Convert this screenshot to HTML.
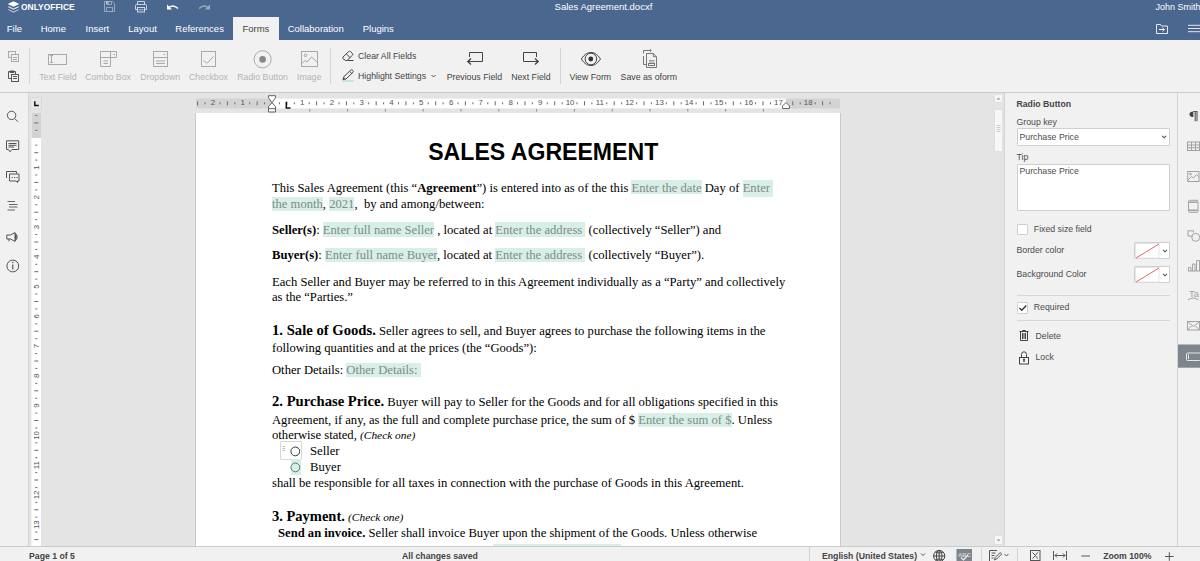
<!DOCTYPE html>
<html><head><meta charset="utf-8">
<style>
*{margin:0;padding:0;box-sizing:border-box}
html,body{width:1200px;height:561px;overflow:hidden;background:#e4e4e4;font-family:"Liberation Sans",sans-serif}
.a{position:absolute}
.t{position:absolute;white-space:pre;line-height:1}
#hdr{left:0;top:0;width:1200px;height:40px;background:#4a6790}
#tb{left:0;top:40px;width:1200px;height:53px;background:#f1f1f1;border-bottom:1px solid #cbcbcb}
#lsb{left:0;top:93px;width:29px;height:453px;background:#f1f1f1;border-right:1px solid #d4d4d4}
#sb{left:0;top:546px;width:1200px;height:15px;background:#f1f1f1;border-top:1px solid #cbcbcb}
#rp{left:1004px;top:93px;width:174px;height:453px;background:#f1f1f1;border-left:1px solid #d4d4d4}
#rbar{left:1177px;top:93px;width:23px;height:453px;background:#f1f1f1;border-left:1px solid #d4d4d4}
#page{left:195px;top:113px;width:646px;height:433px;background:#fff;border-left:1px solid #c8c8c8;border-right:1px solid #c8c8c8}
.tab{color:#fff;font-size:9.5px}
.tl{color:#b4b4b4;font-size:8.75px}
.tl2{color:#444;font-size:8.75px}
.doc{font-family:"Liberation Serif",serif;font-size:12.64px;color:#000}
.ph{background:#d8efe8;color:#7d8c87}
b{font-weight:bold}
.rl{font-size:8.75px;color:#4c4c4c}
.inp{background:#fff;border:1px solid #cfcfcf;border-radius:1px}
.sbt{font-size:8.7px;font-weight:bold;color:#444}
</style></head><body>
<div id="hdr" class="a">
<svg class="a" style="left:5.6px;top:-0.3px" width="15" height="14.5" viewBox="0 0 14 14">
<path d="M7 1.2 L12.6 3.9 L7 6.6 L1.4 3.9 Z" fill="#fff"/>
<path d="M2.6 6.1 L1.4 6.7 L7 9.4 L12.6 6.7 L11.4 6.1 L7 8.2 Z" fill="#fff" opacity=".8"/>
<path d="M2.6 8.9 L1.4 9.5 L7 12.2 L12.6 9.5 L11.4 8.9 L7 11 Z" fill="#fff" opacity=".6"/>
</svg>
<div class="t" style="left:21.3px;top:2.2px;font-size:9.4px;font-weight:bold;color:#fff;transform:scaleX(.9);transform-origin:0 0">ONLYOFFICE</div>
<svg class="a" style="left:100px;top:0" width="50" height="15" viewBox="100 0 50 15">
<g opacity=".42" fill="none" stroke="#fff" stroke-width="1">
<path d="M104.5 1.5 H112.3 L114.5 3.7 V11.5 H104.5 Z"/>
<path d="M106.5 1.5 V4.5 H111.5 V1.5"/>
<rect x="106.5" y="7.5" width="6" height="4"/>
</g>
<rect x="106" y="1.5" width="3" height="2.5" fill="#fff" opacity=".4"/>
<g opacity=".8" fill="none" stroke="#fff" stroke-width=".9">
<path d="M137.5 4.5 V1.5 H144.5 V4.5"/>
<path d="M137.5 9.5 H135.5 V5.5 Q135.5 4.5 136.5 4.5 H145.5 Q146.5 4.5 146.5 5.5 V9.5 H144.5"/>
<rect x="137.5" y="7.5" width="7" height="4.5"/>
</g>
<path d="M138.5 9.8 H143.5" stroke="#fff" stroke-width="1" opacity=".6"/>
</svg>
<svg class="a" style="left:166px;top:3px" width="13" height="8" viewBox="0 0 13 8">
<path d="M1 1.5 V6.5 H6 Z" fill="#fff"/><path d="M3 4.5 Q7 1 12 5.5" fill="none" stroke="#fff" stroke-width="1.6"/>
</svg>
<svg class="a" style="left:198px;top:3px" width="13" height="8" viewBox="0 0 13 8" opacity=".45">
<path d="M12 1.5 V6.5 H7 Z" fill="#fff"/><path d="M10 4.5 Q6 1 1 5.5" fill="none" stroke="#fff" stroke-width="1.6"/>
</svg>
<div class="t" style="left:554.6px;top:1.6px;font-size:9.5px;color:#fff">Sales Agreement.docxf</div>
<div class="t" style="left:1155.5px;top:3px;font-size:9px;color:#fff">John Smith</div>
<div class="t tab" style="left:6.8px;top:24.3px">File</div>
<div class="t tab" style="left:40.7px;top:24.3px">Home</div>
<div class="t tab" style="left:85.5px;top:24.3px">Insert</div>
<div class="t tab" style="left:128.3px;top:24.3px">Layout</div>
<div class="t tab" style="left:175.3px;top:24.3px">References</div>
<div class="a" style="left:233px;top:17px;width:46px;height:23px;background:#f1f1f1"></div>
<div class="t tab" style="left:242.4px;top:24.3px;color:#444">Forms</div>
<div class="t tab" style="left:287.7px;top:24.3px">Collaboration</div>
<div class="t tab" style="left:362.7px;top:24.3px">Plugins</div>
<svg class="a" style="left:1155px;top:23px" width="14" height="12" viewBox="0 0 14 12">
<path d="M1.5 1.5 H5.5 L6.5 3 H12.5 V10.5 H1.5 Z" fill="none" stroke="#fff" stroke-width="1" opacity=".85"/>
<path d="M4 6.5 H9.5 M7.5 4.8 L9.5 6.5 L7.5 8.2" fill="none" stroke="#fff" stroke-width="1"/>
</svg>
<svg class="a" style="left:1187px;top:24px" width="13" height="9" viewBox="0 0 13 9">
<path d="M1 1.3 H13 M1 4.5 H13 M1 7.7 H13" stroke="#fff" stroke-width="1" opacity=".85"/>
</svg>
</div>
<div id="tb" class="a"></div>
<div id="tbc" class="a" style="left:0;top:40px;width:1200px;height:52px">
<svg class="a" style="left:0;top:0" width="700" height="52" viewBox="0 40 700 52">
<g fill="none" stroke="#a9a9a9" stroke-width="1">
<rect x="8.5" y="51.5" width="7" height="6"/>
<rect x="11.5" y="54.5" width="7" height="7" fill="#f1f1f1"/>
<path d="M13 57.5 H17 M13 59.5 H17"/>
</g>
<g fill="none" stroke="#555" stroke-width="1">
<path d="M10.5 71.5 H8.5 V78.5 H11"/><path d="M10 71 H14 V72.5 H10Z" fill="#555"/>
<path d="M14 71.5 H15.5 V74"/>
<rect x="11.5" y="74.5" width="7" height="7" fill="#f1f1f1"/>
<path d="M13 76.5 H17 M13 78.5 H17"/>
</g>
<path d="M29.5 48 V84 M330.5 48 V84 M560.5 48 V84" stroke="#d4d4d4" stroke-width="1"/>
<g fill="none" stroke="#a9a9a9" stroke-width="1">
<rect x="48.5" y="54.5" width="18" height="10"/>
<path d="M50 55.5 H53 M51.5 55.5 V62.5 M50 62.5 H53"/>
<path d="M100.5 51.5 H110.5 V66.5 H100.5 Z M100.5 57.5 H116.5 V51.5 H110.5"/>
<path d="M112.8 54 L113.8 55 L114.8 54"/>
<path d="M103.5 61 H108 M103.5 63.5 H108"/>
<rect x="153.5" y="51.5" width="14" height="15"/>
<path d="M153.5 57.5 H167.5 M163.3 54 L164.3 55 L165.3 54 M156 61 H165 M156 63.5 H165"/>
<rect x="201.5" y="51.5" width="14" height="15"/>
<path d="M203.6 60.5 L207 63.3 L213.6 56.4"/>
<circle cx="262.6" cy="59.3" r="8.6"/>
<rect x="301.5" y="51.5" width="16" height="15"/>
<circle cx="305.5" cy="55.3" r="1.3"/>
<path d="M302 63.3 L305 60.6 L307.2 62 L311.5 57 L317.5 62.5"/>
</g>
<circle cx="262.6" cy="59.4" r="3.3" fill="#888"/>
<g fill="none" stroke="#444" stroke-width="1">
<path d="M342.8 57.2 L348.6 51.6 Q349.6 50.8 350.5 51.6 L352.4 53.4 Q353.2 54.4 352.4 55.3 L347 60.5 H345.5 L342.8 58.5 Z M346.2 53.8 L350.2 57.7 M347.5 60.5 H353.5"/>
<path d="M343 79.5 L343.8 76.7 L350.8 70.1 Q351.6 69.4 352.4 70.1 L353 70.7 Q353.7 71.5 353 72.3 L346 79 Z M349.6 71.3 L351.8 73.5"/>
</g>
<path d="M343 79.5 L344 77.5 L345.2 78.6Z" fill="#444"/>
<rect x="342" y="80" width="11.5" height="2" fill="#c3e6da"/>
<path d="M431.5 75 L433.5 77 L435.5 75" fill="none" stroke="#555" stroke-width="1"/>
<g fill="none" stroke="#444" stroke-width="1">
<path d="M469.5 57 V52.5 H482.5 V61.5 H468"/>
<path d="M471 58.5 L467.8 61.5 L471 64.5" stroke-width="1.4"/>
<path d="M536.5 57 V52.5 H523.5 V61.5 H538"/>
<path d="M535 58.5 L538.2 61.5 L535 64.5" stroke-width="1.4"/>
<path d="M581.3 59 C585 53.5 588 52.5 590.9 52.5 C593.8 52.5 596.8 53.5 600.5 59 C596.8 64.5 593.8 65.5 590.9 65.5 C588 65.5 585 64.5 581.3 59 Z"/>
<circle cx="590.9" cy="59" r="5.8"/>
<g stroke="#777"><path d="M643.5 53.5 V50.5 H651 M649.8 49.2 L651.3 50.5 L649.8 51.8 M643.5 56 V64.5 H646"/>
<path d="M646.5 53.5 H653.3 L656.5 56.7 V67.5 H646.5 Z M653.3 53.5 V56.7 H656.5"/>
<path d="M649 60.5 H654.5 M649 62 H654.5" stroke="#999"/>
<rect x="648.5" y="63.5" width="6" height="2"/></g>
</g>
<circle cx="590.8" cy="59" r="2.4" fill="#333"/>
</svg>
<div class="t tl" style="left:39.2px;top:32.6px">Text Field</div>
<div class="t tl" style="left:85.2px;top:32.6px">Combo Box</div>
<div class="t tl" style="left:140.2px;top:32.6px">Dropdown</div>
<div class="t tl" style="left:189px;top:32.6px">Checkbox</div>
<div class="t tl" style="left:237.3px;top:32.6px">Radio Button</div>
<div class="t tl" style="left:297px;top:32.6px">Image</div>
<div class="t tl2" style="left:358px;top:12.2px">Clear All Fields</div>
<div class="t tl2" style="left:358px;top:32px">Highlight Settings</div>
<div class="t tl2" style="left:446.7px;top:32.6px">Previous Field</div>
<div class="t tl2" style="left:511.2px;top:32.6px">Next Field</div>
<div class="t tl2" style="left:569.5px;top:32.6px">View Form</div>
<div class="t tl2" style="left:620.6px;top:32.6px">Save as oform</div>
</div>
<div id="lsb" class="a"></div>
<svg class="a" style="left:0;top:93px" width="28" height="200" viewBox="0 93 28 200">
<g fill="none" stroke="#555" stroke-width="1">
<circle cx="11.6" cy="115.4" r="4.2"/><path d="M14.6 118.4 L18 121.8"/>
<path d="M6.5 140.8 H18.7 V149.5 H12 L10 151.8 L8.5 149.5 H6.5 Z"/>
<path d="M8.5 143.5 H16.5 M8.5 145.3 H16.5 M8.5 147 H14" />
<path d="M6.5 178 V171.5 H16.5 V173.5"/>
<path d="M9.5 174 H19 V181 H17.5 V182.5 L16 181 H9.5 Z"/>
</g>
<path d="M11.5 177.5 h1.2 M14 177.5 h1.2 M16.4 177.5 h1.2" stroke="#555" stroke-width="1.2"/>
<path d="M7.5 201.5 H15 M9 204.5 H17.5 M9 207 H17.5 M7.5 210 H15" stroke="#666" stroke-width="1"/>
<g fill="none" stroke="#555" stroke-width="1">
<path d="M6.8 235 H10.5 L15 232.6 V241.4 L10.5 239 H6.8 Z M9 239 V241.5"/>
<path d="M15 232.8 Q19.4 237 15 241.2"/>
<circle cx="12.8" cy="266" r="5.9"/>
</g>
<path d="M15 233.5 Q18.5 237 15 240.5Z" fill="#555"/>
<path d="M12.8 264.5 V269.5" stroke="#555" stroke-width="1.2"/><circle cx="12.8" cy="262.6" r=".75" fill="#555"/>
</svg>
<div id="rp" class="a"></div>
<div class="a" style="left:993.5px;top:93.5px;width:9px;height:9.5px;background:#f7f7f7;border:1px solid #e0e0e0"></div>
<svg class="a" style="left:994px;top:94px" width="9" height="9"><path d="M2.5 5.5 L4.5 3.5 L6.5 5.5Z" fill="#999"/></svg>
<div class="a" style="left:993.5px;top:109px;width:9px;height:43px;background:#f7f7f7;border:1px solid #e0e0e0"></div>
<svg class="a" style="left:994px;top:124px" width="9" height="11"><path d="M2.5 1.5 H6.5 M2.5 3.5 H6.5 M2.5 5.5 H6.5 M2.5 7.5 H6.5" stroke="#ccc" stroke-width="1"/></svg>
<div class="a" style="left:993.5px;top:535px;width:9px;height:10px;background:#f7f7f7;border:1px solid #e0e0e0"></div>
<svg class="a" style="left:994px;top:536px" width="9" height="9"><path d="M2.5 3.5 L4.5 5.5 L6.5 3.5Z" fill="#999"/></svg>
<div class="t" style="left:1016.5px;top:99.9px;font-size:8.7px;font-weight:bold;color:#444">Radio Button</div>
<div class="t rl" style="left:1016.5px;top:117.5px">Group key</div>
<div class="a inp" style="left:1016.5px;top:128px;width:153px;height:17.5px"></div>
<div class="t rl" style="left:1019.5px;top:132.5px">Purchase Price</div>
<svg class="a" style="left:1160.5px;top:134px" width="8" height="6"><path d="M1.2 1.8 L3.2 3.8 L5.2 1.8" fill="none" stroke="#555" stroke-width="1.1"/></svg>
<div class="t rl" style="left:1016.5px;top:153.0px">Tip</div>
<div class="a inp" style="left:1016.5px;top:163.5px;width:153px;height:47px"></div>
<div class="t rl" style="left:1019.5px;top:167.0px">Purchase Price</div>
<div class="a inp" style="left:1016.5px;top:223.5px;width:11.5px;height:11.5px"></div>
<div class="t rl" style="left:1033.8px;top:224.7px">Fixed size field</div>
<div class="t rl" style="left:1016.5px;top:246.0px">Border color</div>
<div class="a inp" style="left:1133.5px;top:241.5px;width:36.5px;height:17.5px"></div>
<svg class="a" style="left:1133.5px;top:241.5px" width="37" height="18"><rect x="1.5" y="1.5" width="23.5" height="14.5" fill="#fff" stroke="#e6e6e6"/><path d="M2 16 L25 2" stroke="#e36a6a" stroke-width="1"/><path d="M29 7.8 L31 9.8 L33 7.8" fill="none" stroke="#555" stroke-width="1.1"/></svg>
<div class="t rl" style="left:1016.5px;top:270.0px">Background Color</div>
<div class="a inp" style="left:1133.5px;top:265.5px;width:36.5px;height:17.5px"></div>
<svg class="a" style="left:1133.5px;top:265.5px" width="37" height="18"><rect x="1.5" y="1.5" width="23.5" height="14.5" fill="#fff" stroke="#e6e6e6"/><path d="M2 16 L25 2" stroke="#e36a6a" stroke-width="1"/><path d="M29 7.8 L31 9.8 L33 7.8" fill="none" stroke="#555" stroke-width="1.1"/></svg>
<div class="a" style="left:1016.5px;top:295px;width:153px;height:1px;background:#d6d6d6"></div>
<div class="a inp" style="left:1016.5px;top:302px;width:11.5px;height:11.5px"></div>
<svg class="a" style="left:1016.5px;top:302px" width="12" height="12"><path d="M2.5 6 L4.8 8.3 L9.3 3.5" fill="none" stroke="#333" stroke-width="1.3"/></svg>
<div class="t rl" style="left:1033.8px;top:303.1px">Required</div>
<div class="a" style="left:1016.5px;top:320px;width:153px;height:1px;background:#d6d6d6"></div>
<svg class="a" style="left:1016px;top:328px" width="16" height="38" viewBox="0 0 16 38">
<g fill="none" stroke="#444" stroke-width="1">
<path d="M3.5 3.5 H12.5 M6.5 3.5 V2.5 H9.5 V3.5 M4.5 3.5 V12.5 H11.5 V3.5 M6.5 5 V11 M8 5 V11 M9.5 5 V11"/>
<rect x="3.5" y="29.5" width="9" height="6.5"/>
<path d="M5.5 29.5 V26.5 Q5.5 23.8 8 23.8 Q10.5 23.8 10.5 26.5 V29.5"/>
<path d="M8 31.5 V34" stroke-width="1.3"/>
</g>
<circle cx="8" cy="31.6" r="1" fill="#444"/>
</svg>
<div class="t rl" style="left:1035.5px;top:331.5px">Delete</div>
<div class="t rl" style="left:1035.5px;top:353.3px">Lock</div>

<div id="rbar" class="a"></div>
<svg class="a" style="left:1178px;top:93px" width="22" height="453" viewBox="1178 93 22 453">
<rect x="1178" y="344.5" width="22" height="23.2" fill="#7f858c"/>
<path d="M1193.3 111.5 H1197 V121.3 M1195.2 111.5 V121.3" fill="none" stroke="#555" stroke-width="1.1"/>
<path d="M1193.3 111.5 Q1189.5 111.5 1189.5 114.2 Q1189.5 117 1193.3 117Z" fill="#444"/>
<g fill="none" stroke="#a2a2a2" stroke-width="1">
<rect x="1187.5" y="142" width="12" height="8.5"/><path d="M1187.5 145 H1200 M1187.5 147.7 H1200 M1191.5 142 V150.5 M1195.5 142 V150.5"/>
<rect x="1187.7" y="171.5" width="11.3" height="10"/><path d="M1188 180 L1191.5 176.5 L1193.5 178 L1196.5 174.5 L1199 177"/><circle cx="1190.5" cy="174" r=".9"/>
<rect x="1188.5" y="200.3" width="9.5" height="12" rx="1"/><path d="M1189 202.3 H1197.5 M1189 210.3 H1197.5" stroke-width="1.4"/>
<path d="M1193 236 H1188 V230.8 H1193.5 V232.5"/><circle cx="1195.7" cy="237.3" r="4"/>
<path d="M1188.5 271 V267.5 H1191 V271 M1192.5 271 V264 H1195 V271 M1196.5 271 V260.5 H1199.5 V271 M1188 271 H1200"/>
<path d="M1188 300 Q1193.2 296 1198.4 300"/>
<rect x="1187.5" y="321.5" width="12" height="8.5"/><path d="M1187.5 321.5 L1193.5 326.5 L1199.5 321.5 M1187.5 330 L1191.5 326 M1199.5 330 L1195.5 326"/>
</g>
<text x="1189" y="297" font-family="Liberation Sans" font-size="9.5" fill="#a2a2a2">Ta</text>
<g fill="none" stroke="#e8e8e8" stroke-width="1"><rect x="1186.5" y="353" width="14" height="7.5" rx="1"/><path d="M1188.5 354.5 V359"/></g>
</svg>
<div id="page" class="a"></div>
<div id="doc" class="a" style="left:0;top:0;width:1200px;height:561px">
<div class="t" style="left:428.2px;top:141.2px;font-size:23.1px;font-weight:bold;font-family:'Liberation Sans',sans-serif">SALES AGREEMENT</div>
<div class="t doc" style="left:272px;top:182px">This Sales Agreement (this “<b>Agreement</b>”) is entered into as of the this <span class="ph" style="padding-top:1px;background:linear-gradient(#d8efe8 calc(100% - 1px),transparent 0)">Enter the date</span> Day of <span class="ph" style="padding-top:1px;padding-bottom:2px">Enter </span></div>
<div class="t doc" style="left:272px;top:197.8px"><span class="ph">the month</span>, <span class="ph">2021</span>,  by and among/between:</div>
<div class="t doc" style="left:272px;top:223.6px"><b>Seller(s)</b>: <span class="ph" style="padding-top:1px">Enter full name Seller</span> , located at <span class="ph" style="padding-top:1px">Enter the address </span> (collectively “Seller”) and</div>
<div class="t doc" style="left:272px;top:248.6px"><b>Buyer(s)</b>: <span class="ph">Enter full name Buyer</span>, located at <span class="ph">Enter the address </span> (collectively “Buyer”).</div>
<div class="t doc" style="left:272px;top:275.6px">Each Seller and Buyer may be referred to in this Agreement individually as a “Party” and collectively</div>
<div class="t doc" style="left:272px;top:291px">as the “Parties.”</div>
<div class="t doc" style="left:272px;top:322.8px"><b style="font-size:14.66px">1. Sale of Goods.</b> Seller agrees to sell, and Buyer agrees to purchase the following items in the</div>
<div class="t doc" style="left:272px;top:341.8px">following quantities and at the prices (the “Goods”):</div>
<div class="t doc" style="left:272px;top:364px">Other Details: <span class="ph">Other Details: </span></div>
<div class="t doc" style="left:272px;top:394px"><b style="font-size:14.66px">2. Purchase Price.</b> Buyer will pay to Seller for the Goods and for all obligations specified in this</div>
<div class="t doc" style="left:272px;top:414.2px">Agreement, if any, as the full and complete purchase price, the sum of $ <span class="ph">Enter the sum of $</span>. Unless</div>
<div class="t doc" style="left:272px;top:428.8px">otherwise stated, <i style="font-size:11.4px">(Check one)</i></div>
<div class="a" style="left:280px;top:441px;width:22px;height:19px;border:1px solid #d6d6d6;border-radius:1px"></div>
<svg class="a" style="left:282px;top:444px" width="4" height="9"><path d="M0.5 2.5 H3 M0.5 4.5 H3 M0.5 6.5 H3" stroke="#bbb" stroke-width="1"/></svg>
<svg class="a" style="left:289px;top:445px" width="13" height="13"><circle cx="6.3" cy="6.4" r="4.4" fill="none" stroke="#333" stroke-width="1"/></svg>
<div class="t doc" style="left:310px;top:445px">Seller</div>
<div class="a" style="left:290.5px;top:459px;width:10.5px;height:16px;background:#d8efe8"></div>
<svg class="a" style="left:289px;top:461px" width="13" height="13"><circle cx="6.3" cy="6.4" r="4.4" fill="none" stroke="#5f7a72" stroke-width="1"/></svg>
<div class="t doc" style="left:310px;top:460.6px">Buyer</div>
<div class="t doc" style="left:272px;top:477px">shall be responsible for all taxes in connection with the purchase of Goods in this Agreement.</div>
<div class="t doc" style="left:272px;top:508.9px"><b style="font-size:14.5px">3. Payment.</b> <i style="font-size:11.4px">(Check one)</i></div>
<div class="t doc" style="left:278px;top:527.2px"><b>Send an invoice.</b> Seller shall invoice Buyer upon the shipment of the Goods. Unless otherwise</div>
<div class="a" style="left:493px;top:544px;width:128px;height:2px;background:#d8efe8"></div>
</div>
<svg class="a" style="left:0;top:0" width="1200" height="561" viewBox="0 0 1200 561">
<rect x="196" y="98.5" width="644" height="10" fill="#d3d3d3"/>
<rect x="272" y="98.5" width="514" height="10" fill="#fff"/>
<path d="M197.6 101.3 V105.3 M205.0 102.3 V104.3 M219.9 102.3 V104.3 M227.4 101.3 V105.3 M234.8 102.3 V104.3 M249.7 102.3 V104.3 M257.1 101.3 V105.3 M264.6 102.3 V104.3 M279.4 102.3 V104.3 M286.9 101.3 V105.3 M294.3 102.3 V104.3 M309.2 102.3 V104.3 M316.6 101.3 V105.3 M324.1 102.3 V104.3 M339.0 102.3 V104.3 M346.4 101.3 V105.3 M353.8 102.3 V104.3 M368.7 102.3 V104.3 M376.2 101.3 V105.3 M383.6 102.3 V104.3 M398.5 102.3 V104.3 M405.9 101.3 V105.3 M413.4 102.3 V104.3 M428.2 102.3 V104.3 M435.7 101.3 V105.3 M443.1 102.3 V104.3 M458.0 102.3 V104.3 M465.4 101.3 V105.3 M472.9 102.3 V104.3 M487.8 102.3 V104.3 M495.2 101.3 V105.3 M502.6 102.3 V104.3 M517.5 102.3 V104.3 M525.0 101.3 V105.3 M532.4 102.3 V104.3 M547.3 102.3 V104.3 M554.7 101.3 V105.3 M562.2 102.3 V104.3 M577.0 102.3 V104.3 M584.5 101.3 V105.3 M591.9 102.3 V104.3 M606.8 102.3 V104.3 M614.2 101.3 V105.3 M621.7 102.3 V104.3 M636.6 102.3 V104.3 M644.0 101.3 V105.3 M651.4 102.3 V104.3 M666.3 102.3 V104.3 M673.8 101.3 V105.3 M681.2 102.3 V104.3 M696.1 102.3 V104.3 M703.5 101.3 V105.3 M711.0 102.3 V104.3 M725.8 102.3 V104.3 M733.3 101.3 V105.3 M740.7 102.3 V104.3 M755.6 102.3 V104.3 M763.0 101.3 V105.3 M770.5 102.3 V104.3 M792.8 101.3 V105.3 M800.2 102.3 V104.3 M815.1 102.3 V104.3 M822.6 101.3 V105.3 M830.0 102.3 V104.3" stroke="#6a6a6a" stroke-width="1"/>
<g font-family="Liberation Sans" font-size="7.9" fill="#555"><text x="213.0" y="105.4" text-anchor="middle">2</text><text x="242.7" y="105.4" text-anchor="middle">1</text><text x="302.3" y="105.4" text-anchor="middle">1</text><text x="332.0" y="105.4" text-anchor="middle">2</text><text x="361.8" y="105.4" text-anchor="middle">3</text><text x="391.5" y="105.4" text-anchor="middle">4</text><text x="421.3" y="105.4" text-anchor="middle">5</text><text x="451.1" y="105.4" text-anchor="middle">6</text><text x="480.8" y="105.4" text-anchor="middle">7</text><text x="510.6" y="105.4" text-anchor="middle">8</text><text x="540.3" y="105.4" text-anchor="middle">9</text><text x="570.1" y="105.4" text-anchor="middle">10</text><text x="599.9" y="105.4" text-anchor="middle">11</text><text x="629.6" y="105.4" text-anchor="middle">12</text><text x="659.4" y="105.4" text-anchor="middle">13</text><text x="689.1" y="105.4" text-anchor="middle">14</text><text x="718.9" y="105.4" text-anchor="middle">15</text><text x="748.7" y="105.4" text-anchor="middle">16</text><text x="778.4" y="105.4" text-anchor="middle">17</text><text x="808.2" y="105.4" text-anchor="middle">18</text></g>
<path d="M309.8 109 V111.5 M347.6 109 V111.5 M385.4 109 V111.5 M423.2 109 V111.5 M461.0 109 V111.5 M498.8 109 V111.5 M536.6 109 V111.5 M574.4 109 V111.5 M612.2 109 V111.5 M650.0 109 V111.5 M687.8 109 V111.5 M725.6 109 V111.5 M763.4 109 V111.5" stroke="#8a8a8a" stroke-width="1"/>
<path d="M268.5 95.7 H275.5 V97.8 L272 102.7 L268.5 97.8 Z M272 102.7 L275.5 106.6 V112 H268.5 V106.6 Z M268.5 108.6 H275.5" fill="#fff" stroke="#555" stroke-width="0.9" stroke-linejoin="round"/>

<path d="M286.3 102 V107.9 H290.5" fill="none" stroke="#111" stroke-width="1.5"/>
<path d="M782.5 108.5 V106 L786 102.5 L789.5 106 V108.5 Z" fill="#fff" stroke="#555" stroke-width="0.9"/>
<rect x="31.5" y="113" width="9.5" height="433" fill="#fff"/>
<rect x="31.5" y="113" width="9.5" height="25" fill="#d3d3d3"/>
<path d="M35.3 115.5 H37.3 M34.3 122.9 H38.3 M35.3 130.4 H37.3 M35.3 145.2 H37.3 M34.3 152.7 H38.3 M35.3 160.1 H37.3 M35.3 175.0 H37.3 M34.3 182.4 H38.3 M35.3 189.9 H37.3 M35.3 204.8 H37.3 M34.3 212.2 H38.3 M35.3 219.6 H37.3 M35.3 234.5 H37.3 M34.3 242.0 H38.3 M35.3 249.4 H37.3 M35.3 264.3 H37.3 M34.3 271.7 H38.3 M35.3 279.2 H37.3 M35.3 294.0 H37.3 M34.3 301.5 H38.3 M35.3 308.9 H37.3 M35.3 323.8 H37.3 M34.3 331.2 H38.3 M35.3 338.7 H37.3 M35.3 353.6 H37.3 M34.3 361.0 H38.3 M35.3 368.4 H37.3 M35.3 383.3 H37.3 M34.3 390.8 H38.3 M35.3 398.2 H37.3 M35.3 413.1 H37.3 M34.3 420.5 H38.3 M35.3 428.0 H37.3 M35.3 442.8 H37.3 M34.3 450.3 H38.3 M35.3 457.7 H37.3 M35.3 472.6 H37.3 M34.3 480.0 H38.3 M35.3 487.5 H37.3 M35.3 502.4 H37.3 M34.3 509.8 H38.3 M35.3 517.2 H37.3 M35.3 532.1 H37.3 M34.3 539.6 H38.3" stroke="#6a6a6a" stroke-width="1"/>
<g font-family="Liberation Sans" font-size="7.9" fill="#555"><text transform="translate(38.8 167.6) rotate(-90)" text-anchor="middle">1</text><text transform="translate(38.8 197.3) rotate(-90)" text-anchor="middle">2</text><text transform="translate(38.8 227.1) rotate(-90)" text-anchor="middle">3</text><text transform="translate(38.8 256.8) rotate(-90)" text-anchor="middle">4</text><text transform="translate(38.8 286.6) rotate(-90)" text-anchor="middle">5</text><text transform="translate(38.8 316.4) rotate(-90)" text-anchor="middle">6</text><text transform="translate(38.8 346.1) rotate(-90)" text-anchor="middle">7</text><text transform="translate(38.8 375.9) rotate(-90)" text-anchor="middle">8</text><text transform="translate(38.8 405.6) rotate(-90)" text-anchor="middle">9</text><text transform="translate(38.8 435.4) rotate(-90)" text-anchor="middle">10</text><text transform="translate(38.8 465.2) rotate(-90)" text-anchor="middle">11</text><text transform="translate(38.8 494.9) rotate(-90)" text-anchor="middle">12</text><text transform="translate(38.8 524.7) rotate(-90)" text-anchor="middle">13</text></g>
<rect x="30.5" y="97.5" width="11" height="11.5" fill="#e8e8e8" stroke="#d8d8d8" stroke-width="1"/>
<path d="M34.8 101.3 V105.5 H38.8" fill="none" stroke="#111" stroke-width="1.5"/>
</svg>
<div id="sb" class="a"></div>
<div class="t sbt" style="left:29px;top:552px">Page 1 of 5</div>
<div class="t sbt" style="left:402px;top:552px">All changes saved</div>
<div class="t sbt" style="left:822px;top:552px">English (United States)</div>
<div class="t sbt" style="left:1103.2px;top:552px">Zoom 100%</div>
<svg class="a" style="left:800px;top:546px" width="400" height="15" viewBox="800 546 400 15">
<path d="M921 553.5 L923 555.5 L925 553.5" fill="none" stroke="#555" stroke-width="1"/>
<g fill="none" stroke="#444" stroke-width="1"><circle cx="939.2" cy="556" r="5.6"/><path d="M933.6 556 H944.8 M939.2 550.4 V561.6 M935.5 552 Q939.2 554.5 943 552 M935.5 560 Q939.2 557.5 943 560"/><ellipse cx="939.2" cy="556" rx="2.8" ry="5.6"/></g>
<rect x="956.5" y="549" width="15.5" height="12" fill="#7f858c"/>
<text x="958" y="556.5" font-family="Liberation Sans" font-size="6" font-weight="bold" fill="#d0d0d0">ABC</text>
<path d="M961 557.5 L963.5 560 L968 555" fill="none" stroke="#eee" stroke-width="1.2"/>
<path d="M809.5 547 V561 M981.5 548 V561 M1017.5 548 V561" stroke="#d4d4d4" stroke-width="1"/>
<g fill="none" stroke="#555" stroke-width="1">
<path d="M997 550.5 H989.5 V561 M991.5 553 H995.5 M991.5 555.5 H994.5 M991.5 558 H993.5"/>
<path d="M994.5 560 L995.2 557.5 L1000.2 552.5 L1001.7 554 L996.7 559 Z"/>
<path d="M1004.5 554 L1006.5 556 L1008.5 554"/>
<rect x="1030.5" y="550.5" width="9.5" height="10"/>
<path d="M1032.5 552.5 L1035.2 555.2 L1038 552.5 M1032.5 558.5 L1035.2 555.8 L1038 558.5"/>
<path d="M1053.5 551 V560 M1066.5 551 V560 M1055 555.5 H1065 M1057 553.5 L1055 555.5 L1057 557.5 M1063 553.5 L1065 555.5 L1063 557.5"/>
<path d="M1081.3 556 H1090"/>
<path d="M1165 556.5 H1173.7 M1169.3 552.2 V560.8"/>
</g>
</svg>
</body></html>
